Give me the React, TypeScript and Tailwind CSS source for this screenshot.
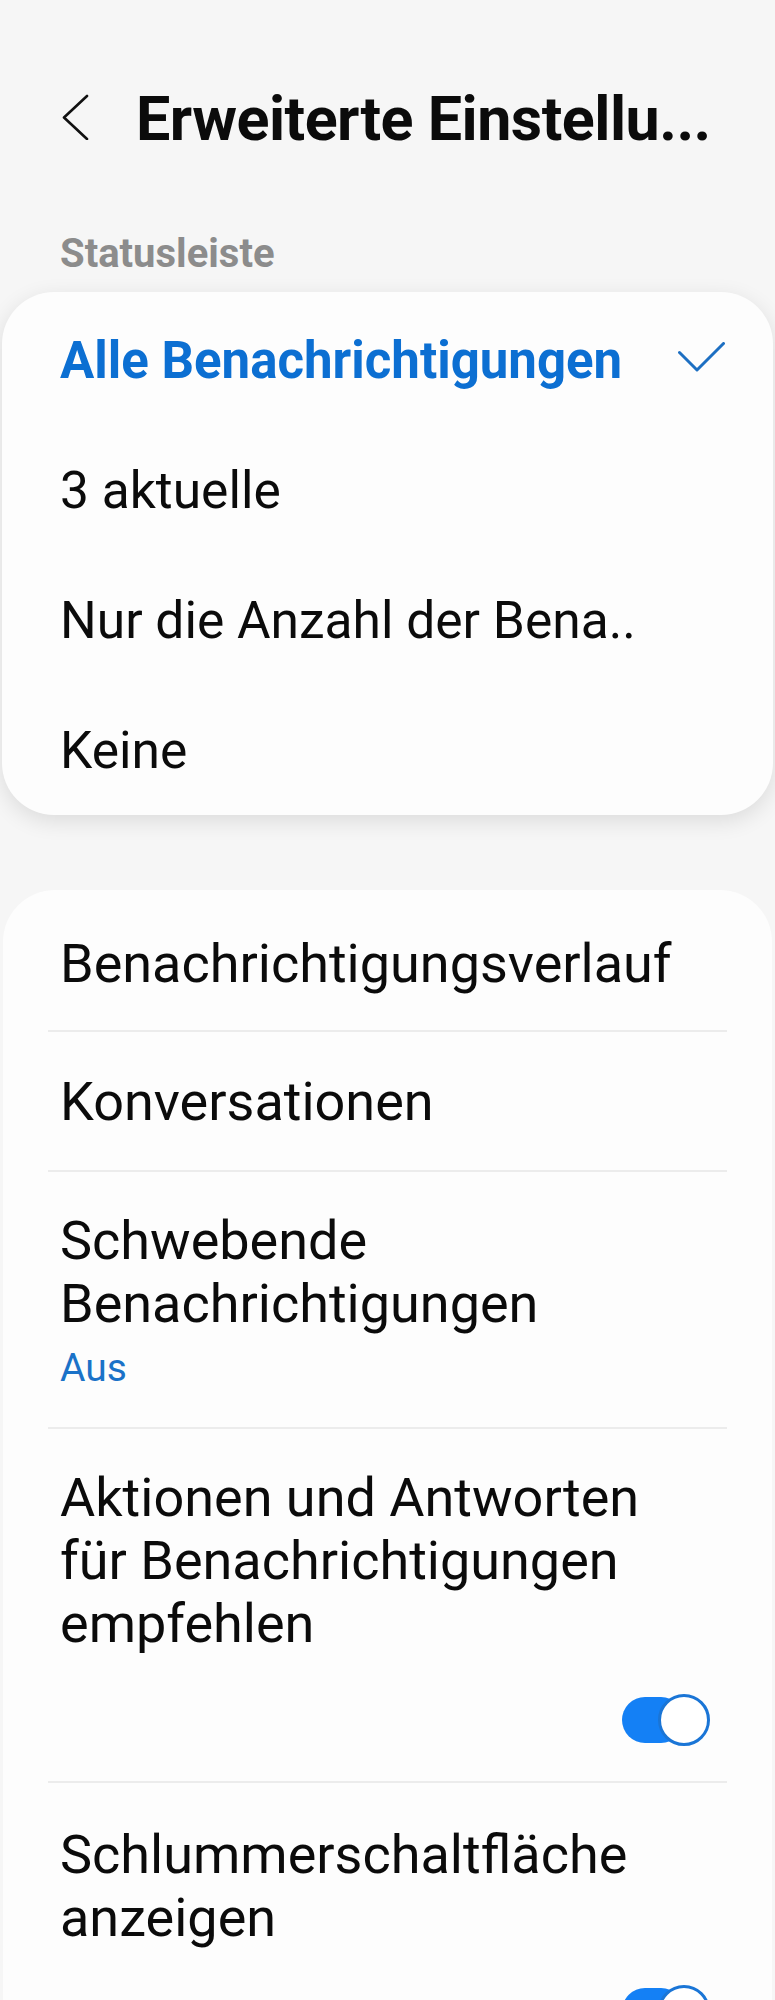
import React from "react";

const Toggle = () => (
  <div className="relative w-[88px] h-[52px]">
    <span className="absolute left-0 top-[3px] h-[46px] w-[62px] rounded-full bg-[#1480f5]" />
    <span className="absolute right-0 top-0 size-[52px] rounded-full border-[3px] border-[#1a75d6] bg-white" />
  </div>
);

const Divider = () => <div className="h-[2px] mx-[45px] bg-[#ececec]" />;

const options = ["3 aktuelle", "Nur die Anzahl der Bena..", "Keine"];

const App = () => {
  return (
    <div className="h-[2000px] overflow-hidden bg-[#f6f6f6] font-[Roboto,sans-serif] text-[#0b0b0b]">
      {/* header */}
      <header className="pt-[89px] pl-[62px] flex items-start">
        <svg width="28" height="46" viewBox="0 0 28 46" className="mt-[5px]" fill="none">
          <path d="M25 2 L2 23.5 L25 45" stroke="#111" strokeWidth="2.6" strokeLinecap="round" strokeLinejoin="round" />
        </svg>
        <h1 className="ml-[46px] text-[61px] leading-[61px] font-bold tracking-[-0.5px] whitespace-nowrap">
          Erweiterte Einstellu...
        </h1>
      </header>

      <p className="mt-[84px] pl-[60px] text-[40px] leading-[40px] font-bold text-[#8c8c8c]">
        Statusleiste
      </p>

      {/* dropdown popup */}
      <div className="mt-[18px] mx-[2px] pt-[3px] rounded-[52px] bg-[#fdfdfd] shadow-[0_6px_22px_rgba(0,0,0,0.11)]">
        <div className="h-[130px] pl-[58px] pr-[48px] flex items-center justify-between">
          <span className="text-[51px] leading-[63px] font-bold text-[#0c6fd2]">Alle Benachrichtigungen</span>
          <svg width="47" height="30" viewBox="0 0 47 30" fill="none" className="-mt-[6px]">
            <path d="M1.5 10.5 L19 28 L45.5 1.5" stroke="#1d6fc2" strokeWidth="3" strokeLinecap="round" strokeLinejoin="round" />
          </svg>
        </div>
        {options.map((o) => (
          <div key={o} className="h-[130px] pl-[58px] flex items-center">
            <span className="text-[51.5px] leading-[63px]">{o}</span>
          </div>
        ))}
      </div>

      {/* settings list */}
      <div className="mt-[75px] mx-[3px] rounded-[52px] bg-[#fdfdfd] text-[54px] leading-[63px] pb-[60px]">
        <div className="pl-[57px] pt-[42px] pb-[35px]">Benachrichtigungsverlauf</div>
        <Divider />
        <div className="pl-[57px] pt-[38px] pb-[37px]">Konversationen</div>
        <Divider />
        <div className="pl-[57px] pt-[37px] pb-[35px]">
          <div>Schwebende</div>
          <div>Benachrichtigungen</div>
          <div className="mt-[10px] text-[39px] leading-[47px] text-[#1a72c8]">Aus</div>
        </div>
        <Divider />
        <div className="pl-[57px] pr-[62px] pt-[37px] pb-[35px]">
          <div>Aktionen und Antworten</div>
          <div>für Benachrichtigungen</div>
          <div>empfehlen</div>
          <div className="mt-[39px] flex justify-end">
            <Toggle />
          </div>
        </div>
        <Divider />
        <div className="pl-[57px] pr-[62px] pt-[40px] pb-[35px]">
          <div>Schlummerschaltfläche</div>
          <div>anzeigen</div>
          <div className="mt-[36px] flex justify-end">
            <Toggle />
          </div>
        </div>
      </div>
    </div>
  );
};

export default App;
